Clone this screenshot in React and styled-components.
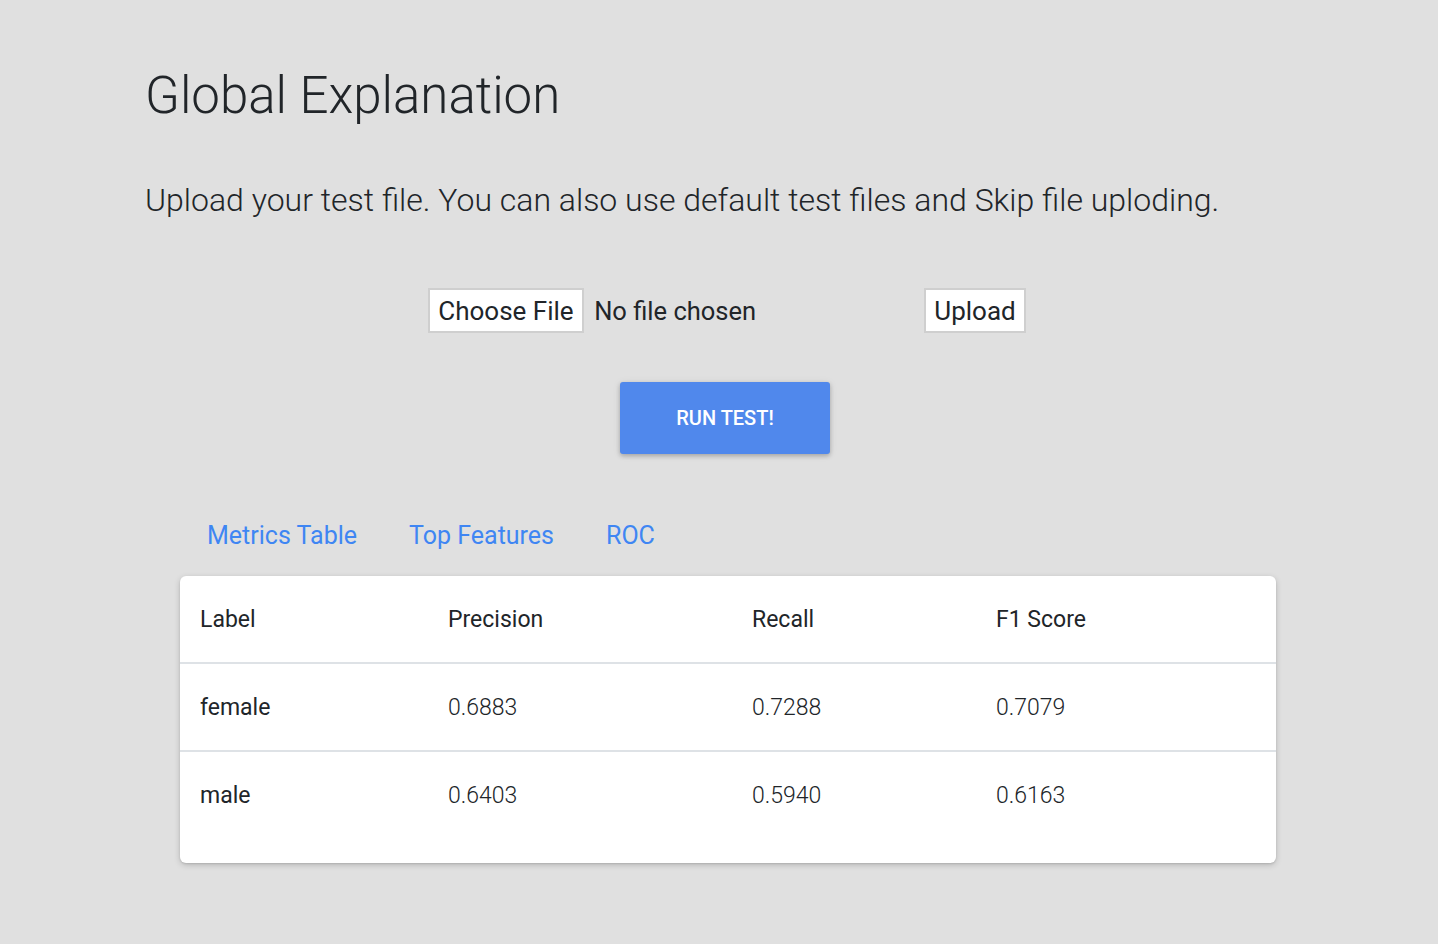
import React from "react";
import styled, { createGlobalStyle } from "styled-components";

const Global = createGlobalStyle`
  html, body { margin: 0; padding: 0; background: #e0e0e0; }
  body { font-family: Roboto, "Noto Sans", sans-serif; color: #212529; }
`;

const Page = styled.div`
  display: flex;
  flex-direction: column;
  padding: 62px 129px 60px 145px;
`;

const Title = styled.h1`
  margin: 0;
  font-size: 51px;
  font-weight: 300;
  line-height: 68px;
  color: #212529;
`;

const Lead = styled.p`
  margin: 50px 0 0;
  font-size: 32px;
  font-weight: 300;
  line-height: 40px;
  color: #212529;
`;

const UploadRow = styled.div`
  display: flex;
  justify-content: center;
  align-items: center;
  margin-top: 68px;
`;

const FileGroup = styled.div`
  display: flex;
  align-items: center;
  width: 496px;
`;

const FileButton = styled.button`
  font-family: Roboto, sans-serif;
  font-size: 26px;
  font-weight: 400;
  color: #212529;
  background: #fff;
  border: 2px solid #cfcfcf;
  height: 45px;
  padding: 0 8.5px;
  margin: 0;
  cursor: pointer;
`;

const FileName = styled.span`
  font-size: 25.5px;
  margin-left: 10px;
  color: #212529;
`;

const RunWrap = styled.div`
  display: flex;
  justify-content: center;
  margin-top: 49px;
`;

const RunButton = styled.button`
  width: 210px;
  height: 72px;
  margin-right: 4px;
  background: #5088ec;
  color: #fff;
  border: none;
  border-radius: 3px;
  font-family: Roboto, sans-serif;
  font-size: 20px;
  font-weight: 500;
  box-shadow: 0 2px 4px rgba(0,0,0,0.22), 0 1px 8px rgba(0,0,0,0.08);
  cursor: pointer;
`;

const Tabs = styled.nav`
  display: flex;
  gap: 52px;
  margin: 64px 0 0 62px;
`;

const Tab = styled.a`
  font-size: 25px;
  line-height: 36px;
  color: #3f86f3;
  text-decoration: none;
  cursor: pointer;
`;

const Card = styled.div`
  margin: 22px 33px 0 35px;
  background: #fff;
  border-radius: 6px;
  box-shadow: 0 2px 6px rgba(0,0,0,0.18), 0 1px 2px rgba(0,0,0,0.1);
  padding-bottom: 25px;
`;

const Table = styled.table`
  width: 100%;
  border-collapse: collapse;
  table-layout: fixed;
  font-family: Roboto, sans-serif;
`;

const Col = styled.col`
  width: ${p => p.$w};
`;

const Th = styled.th`
  text-align: left;
  font-weight: 400;
  font-size: 23px;
  color: #212529;
  padding: 1px 20px 0;
  height: 85px;
`;

const Tr = styled.tr`
  border-top: 2px solid #dee2e6;
`;

const Td = styled.td`
  font-size: 23px;
  font-weight: ${p => (p.$label ? 400 : 300)};
  color: #212529;
  padding: 1px 20px 0;
  height: 85px;
`;

const rows = [
  ["female", "0.6883", "0.7288", "0.7079"],
  ["male", "0.6403", "0.5940", "0.6163"],
];

export default function App() {
  return (
    <>
      <Global />
      <Page>
        <Title>Global Explanation</Title>
        <Lead>Upload your test file. You can also use default test files and Skip file uploding.</Lead>
        <UploadRow>
          <FileGroup>
            <FileButton>Choose File</FileButton>
            <FileName>No file chosen</FileName>
          </FileGroup>
          <FileButton>Upload</FileButton>
        </UploadRow>
        <RunWrap>
          <RunButton>RUN TEST!</RunButton>
        </RunWrap>
        <Tabs>
          <Tab>Metrics Table</Tab>
          <Tab>Top Features</Tab>
          <Tab>ROC</Tab>
        </Tabs>
        <Card>
          <Table>
            <colgroup>
              <Col $w="248px" />
              <Col $w="304px" />
              <Col $w="244px" />
              <Col $w="auto" />
            </colgroup>
            <thead>
              <tr>
                <Th>Label</Th>
                <Th>Precision</Th>
                <Th>Recall</Th>
                <Th>F1 Score</Th>
              </tr>
            </thead>
            <tbody>
              {rows.map(r => (
                <Tr key={r[0]}>
                  <Td $label>{r[0]}</Td>
                  <Td>{r[1]}</Td>
                  <Td>{r[2]}</Td>
                  <Td>{r[3]}</Td>
                </Tr>
              ))}
            </tbody>
          </Table>
        </Card>
      </Page>
    </>
  );
}
